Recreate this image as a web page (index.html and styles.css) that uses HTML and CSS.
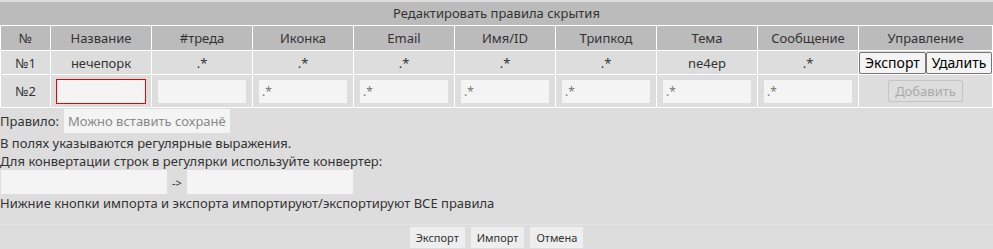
FILE: index.html
```
<!DOCTYPE html>
<html lang="ru">
  <head>
    <meta charset="UTF-8" />
    <title>Правила скрытия</title>
    <link rel="stylesheet" href="styles.css">
  </head>
  <body>
    <div class="hide-editor">
      <div class="editor-title">Редактировать правила скрытия</div>
      <table class="rules-table">
        <tr class="head-row">
          <th class="col-num">№</th>
          <th>Название</th>
          <th>#треда</th>
          <th>Иконка</th>
          <th>Email</th>
          <th>Имя/ID</th>
          <th>Трипкод</th>
          <th>Тема</th>
          <th>Сообщение</th>
          <th class="col-ctrl">Управление</th>
        </tr>
        <tr class="rule-row">
          <td>№1</td>
          <td>нечепорк</td>
          <td>.*</td>
          <td>.*</td>
          <td>.*</td>
          <td>.*</td>
          <td>.*</td>
          <td>ne4ep</td>
          <td>.*</td>
          <td class="ctrl-cell"><button class="row-btn">Экспорт</button><button class="row-btn">Удалить</button></td>
        </tr>
        <tr class="new-row">
          <td>№2</td>
          <td><input class="cell-input invalid" type="text"></td>
          <td><input class="cell-input" type="text"></td>
          <td><input class="cell-input" type="text" placeholder=".*"></td>
          <td><input class="cell-input" type="text" placeholder=".*"></td>
          <td><input class="cell-input" type="text" placeholder=".*"></td>
          <td><input class="cell-input" type="text" placeholder=".*"></td>
          <td><input class="cell-input" type="text" placeholder=".*"></td>
          <td><input class="cell-input" type="text" placeholder=".*"></td>
          <td><button class="row-btn add-btn" disabled>Добавить</button></td>
        </tr>
      </table>

      <div class="rule-line">
        <span>Правило:</span>
        <input class="rule-input" type="text" placeholder="Можно вставить сохранённое правило">
      </div>
      <div class="note">В полях указываются регулярные выражения.</div>
      <div class="note">Для конвертации строк в регулярки используйте конвертер:</div>
      <div class="converter">
        <input class="conv-input" type="text">
        <span class="arrow">-&gt;</span>
        <input class="conv-input" type="text">
      </div>
      <div class="note">Нижние кнопки импорта и экспорта импортируют/экспортируют ВСЕ правила</div>

      <div class="editor-footer">
        <button class="foot-btn">Экспорт</button>
        <button class="foot-btn">Импорт</button>
        <button class="foot-btn">Отмена</button>
      </div>
    </div>
  </body>
</html>
```

FILE: styles.css
```
body {
  margin: 0;
  background-color: #dddddd;
  font-family: "Noto Sans", sans-serif;
  font-size: 13px;
  color: #333333;
}
.hide-editor {
  padding-top: 2px;
}
.editor-title {
  background-color: #bbbbbb;
  text-align: center;
  height: 23px;
  line-height: 23px;
}
.rules-table {
  width: 100%;
  border-collapse: separate;
  border-spacing: 1px;
  background-color: #ffffff;
  table-layout: fixed;
}
.rules-table th,
.rules-table td {
  text-align: center;
  padding: 0;
  font-weight: normal;
}
.head-row th {
  background-color: #bbbbbb;
  height: 24px;
}
.col-num {
  width: 49px;
}
.col-ctrl {
  width: 133px;
}
.rule-row td {
  background-color: #dddddd;
  height: 23px;
}
.new-row td {
  background-color: #dddddd;
  height: 32px;
}
.ctrl-cell {
  white-space: nowrap;
}
.row-btn {
  font-family: inherit;
  font-size: 14px;
  color: #000000;
  background-color: #f4f4f4;
  border: 1px solid #767676;
  border-radius: 2px;
  padding: 0 5px;
  margin: 0;
  height: 22px;
}
.add-btn {
  font-size: 13px;
  color: #aaaaaa;
  border-color: #c4c4c4;
  background-color: #dddddd;
  padding: 0 6px;
}
.cell-input {
  box-sizing: border-box;
  width: 88px;
  height: 23px;
  border: none;
  background-color: #f4f4f4;
  font-family: inherit;
  font-size: 12px;
  padding: 0 3px;
  vertical-align: middle;
}
.cell-input::placeholder {
  color: #777777;
}
.cell-input.invalid {
  width: 90px;
  height: 25px;
  border: 1px solid #ee0000;
}
.rule-line {
  display: flex;
  align-items: center;
  gap: 5px;
  margin-top: 1px;
  margin-bottom: 1px;
}
.rule-input {
  box-sizing: border-box;
  width: 166px;
  height: 24px;
  border: none;
  background-color: #f4f4f4;
  font-family: inherit;
  font-size: 13px;
  padding: 0 4px;
}
.rule-input::placeholder {
  color: #888888;
}
.note {
  line-height: 18px;
}
.converter {
  display: flex;
  align-items: center;
  gap: 5px;
  padding-left: 1px;
}
.conv-input {
  box-sizing: border-box;
  width: 166px;
  height: 24px;
  border: none;
  background-color: #f4f4f4;
}
.arrow {
  font-size: 11px;
}
.editor-footer {
  margin-top: 12px;
  border-top: 1px solid #e4e4e4;
  padding-top: 2px;
  display: flex;
  justify-content: center;
  gap: 6px;
}
.foot-btn {
  font-family: inherit;
  font-size: 11px;
  color: #333333;
  background-color: #eeeeee;
  border: none;
  padding: 0 6px;
  height: 21px;
}
```
